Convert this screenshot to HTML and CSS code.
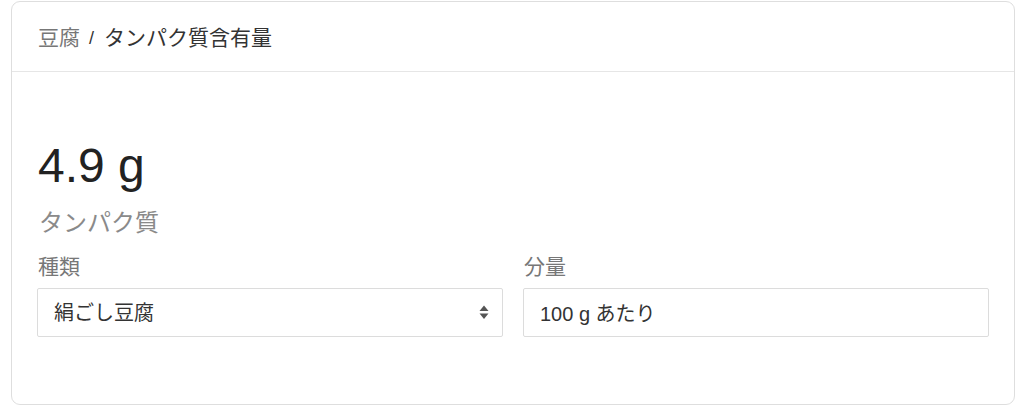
FILE: index.html
```html
<!DOCTYPE html>
<html lang="ja">
<head>
<meta charset="utf-8">
<title>豆腐 / タンパク質含有量</title>
<link rel="stylesheet" href="styles.css">
</head>
<body>
<div class="page">
  <section class="card">
    <header class="card-header">
      <span class="crumb">豆腐</span>
      <span class="sep">/</span>
      <span class="crumb-active">タンパク質含有量</span>
    </header>
    <div class="card-body">
      <div class="value">4.9 g</div>
      <div class="value-label">タンパク質</div>
      <div class="fields">
        <label class="field">
          <span class="field-label">種類</span>
          <span class="select-wrap">
            <select class="control select">
              <option>絹ごし豆腐</option>
              <option>木綿豆腐</option>
            </select>
            <svg class="select-arrows" width="10" height="16" viewBox="0 0 10 16" aria-hidden="true">
              <path d="M5 1.5 L9.5 7 H0.5 Z" fill="#555"/>
              <path d="M5 15 L9.5 9.5 H0.5 Z" fill="#555"/>
            </svg>
          </span>
        </label>
        <label class="field">
          <span class="field-label">分量</span>
          <input class="control" type="text" value="100 g あたり">
        </label>
      </div>
    </div>
  </section>
</div>
</body>
</html>
```

FILE: styles.css
```css
html, body {
  margin: 0;
  padding: 0;
  background: #ffffff;
}

body {
  font-family: "Liberation Sans", "Noto Sans CJK JP", sans-serif;
  color: #333333;
}

.page {
  padding: 1px 0 0 11px;
}

.card {
  box-sizing: border-box;
  width: 1004px;
  height: 404px;
  border: 1px solid #dedede;
  border-radius: 9px;
  display: flex;
  flex-direction: column;
}

.card-header {
  box-sizing: border-box;
  height: 70px;
  border-bottom: 1px solid #e6e6e6;
  padding: 3px 25px 0 26px;
  display: flex;
  align-items: center;
  gap: 9px;
  font-size: 21px;
  line-height: 26px;
}

.crumb {
  color: #777777;
}

.sep {
  color: #333333;
  font-size: 18px;
  margin: 0 1px 0 0;
}

.crumb-active {
  color: #333333;
}

.card-body {
  padding: 66px 25px 0 25px;
  display: flex;
  flex-direction: column;
}

.value {
  font-size: 48px;
  line-height: 56px;
  color: #222222;
  padding-left: 1px;
}

.value-label {
  margin-top: 14px;
  font-size: 24px;
  line-height: 30px;
  color: #8a8a8a;
  padding-left: 2px;
}

.fields {
  margin-top: 16px;
  display: grid;
  grid-template-columns: 1fr 1fr;
  column-gap: 20px;
}

.field {
  display: flex;
  flex-direction: column;
  gap: 8px;
}

.field-label {
  font-size: 21px;
  line-height: 26px;
  color: #777777;
  padding-left: 1px;
}

.select-wrap {
  position: relative;
  display: block;
}

.control {
  box-sizing: border-box;
  width: 100%;
  height: 49px;
  margin: 0;
  padding: 0 16px;
  border: 1px solid #dcdcdc;
  border-radius: 2px;
  background: #ffffff;
  font-family: "Liberation Sans", "Noto Sans CJK JP", sans-serif;
  font-size: 20px;
  color: #333333;
  outline: none;
}

.select {
  -webkit-appearance: none;
  appearance: none;
  display: block;
}

.select-arrows {
  position: absolute;
  right: 14px;
  top: 16px;
}
```
